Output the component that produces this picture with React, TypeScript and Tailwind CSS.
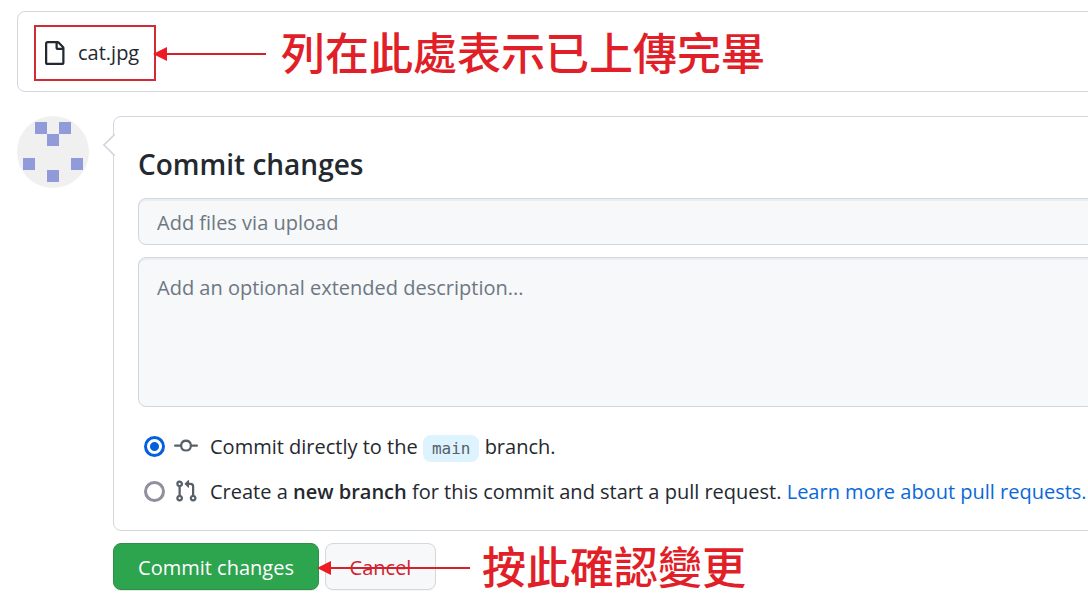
import type { ReactNode } from "react";

function FileIcon() {
  return (
    <svg viewBox="0 0 16 16" className="h-6 w-6 shrink-0 fill-[#24292f]" aria-hidden="true">
      <path
        fillRule="evenodd"
        d="M3.75 1.5a.25.25 0 00-.25.25v12.5c0 .138.112.25.25.25h9.5a.25.25 0 00.25-.25V6h-2.75A1.75 1.75 0 019 4.25V1.5H3.75zm6.75.062V4.25c0 .138.112.25.25.25h2.688a.252.252 0 00-.011-.013l-2.914-2.914a.272.272 0 00-.013-.011zM2 1.75C2 .784 2.784 0 3.75 0h6.586c.464 0 .909.184 1.237.513l2.914 2.914c.329.328.513.773.513 1.237v9.586A1.75 1.75 0 0113.25 16h-9.5A1.75 1.75 0 012 14.25V1.75z"
      />
    </svg>
  );
}

function CommitIcon() {
  return (
    <svg viewBox="0 0 16 16" className="h-6 w-6 shrink-0 fill-[#57606a]" aria-hidden="true">
      <path
        fillRule="evenodd"
        d="M10.5 7.75a2.5 2.5 0 11-5 0 2.5 2.5 0 015 0zm1.43.75a4.002 4.002 0 01-7.86 0H.75a.75.75 0 110-1.5h3.32a4.001 4.001 0 017.86 0h3.32a.75.75 0 110 1.5h-3.32z"
      />
    </svg>
  );
}

function PullRequestIcon() {
  return (
    <svg viewBox="0 0 16 16" className="h-6 w-6 shrink-0 fill-[#57606a]" aria-hidden="true">
      <path
        fillRule="evenodd"
        d="M7.177 3.073L9.573.677A.25.25 0 0110 .854v4.792a.25.25 0 01-.427.177L7.177 3.427a.25.25 0 010-.354zM3.75 2.5a.75.75 0 100 1.5.75.75 0 000-1.5zm-2.25.75a2.25 2.25 0 113 2.122v5.256a2.251 2.251 0 11-1.5 0V5.372A2.25 2.25 0 011.5 3.25zM11 2.5h-1V4h1a1 1 0 011 1v5.628a2.251 2.251 0 101.5 0V5A2.5 2.5 0 0011 2.5zm1 10.25a.75.75 0 111.5 0 .75.75 0 01-1.5 0zM3.75 12a.75.75 0 100 1.5.75.75 0 000-1.5z"
      />
    </svg>
  );
}

function Avatar() {
  const cells = [
    [18, 6],
    [42, 6],
    [30, 18],
    [6, 42],
    [54, 42],
    [30, 54],
  ];
  return (
    <svg viewBox="0 0 72 72" className="h-[72px] w-[72px] shrink-0" role="img" aria-label="Avatar">
      <circle cx="36" cy="36" r="36" fill="#f0f0f0" />
      {cells.map(([x, y]) => (
        <rect key={`${x}-${y}`} x={x} y={y} width="12" height="12" fill="#929bda" />
      ))}
    </svg>
  );
}

function Arrow({ length }: { length: number }) {
  return (
    <svg width={length} height="14" viewBox={`0 0 ${length} 14`} className="shrink-0" aria-hidden="true">
      <path d={`M10 7H${length}`} stroke="#d3222c" strokeWidth="2" />
      <path d="M0 7L14 0V14Z" fill="#ed1c24" />
    </svg>
  );
}

function Note({ children }: { children: ReactNode }) {
  return (
    <p className="pb-1 font-['Noto_Sans_CJK_TC',sans-serif] text-[44px] leading-[52px] font-medium whitespace-nowrap text-[#e11f28]">
      {children}
    </p>
  );
}

const radio =
  "m-0 h-[21px] w-[21px] shrink-0 appearance-none rounded-full border-[3px] border-[#8f8f9d] bg-white checked:border-[#0560dc] checked:bg-[radial-gradient(circle,#0560dc_4px,#fff_5px)]";

const field =
  "block w-full rounded-lg border border-[#d0d7de] bg-[#f6f8fa] px-[18px] text-xl shadow-[inset_0_2px_0_rgba(208,215,222,0.3)] placeholder:text-[#6e7781]";

export default function App() {
  return (
    <main className="min-h-screen overflow-hidden bg-white pt-[11px] pl-[17px] font-['Open_Sans',sans-serif] text-xl text-[#24292f]">
      <div className="-mr-8">
        <section className="flex items-center rounded-lg border border-[#d0d7de] px-4 pt-[13px] pb-[10px]">
          <div className="flex h-14 w-[122px] shrink-0 items-center gap-3 border-2 border-[#cf2c35] pl-[6px]">
            <FileIcon />
            <span>cat.jpg</span>
          </div>
          <div className="-ml-[3px] mr-[15px] flex pt-px">
            <Arrow length={113} />
          </div>
          <Note>列在此處表示已上傳完畢</Note>
        </section>

        <form className="mt-6 flex gap-6" onSubmit={(e) => e.preventDefault()}>
          <Avatar />
          <div className="min-w-0 flex-1">
            <div className="relative rounded-lg border border-[#d0d7de] px-6 pt-[27px] pb-6">
              <svg
                className="absolute top-[17px] -left-[11px]"
                width="12"
                height="22"
                viewBox="0 0 12 22"
                aria-hidden="true"
              >
                <path d="M12 0L1 11L12 22" fill="#fff" stroke="#d0d7de" strokeWidth="1.6" />
              </svg>
              <h2 className="mb-[14px] text-[28px] leading-10 font-semibold">Commit changes</h2>
              <input
                type="text"
                aria-label="Commit summary"
                placeholder="Add files via upload"
                className={`${field} h-[47px] pt-[2px]`}
              />
              <textarea
                aria-label="Extended description"
                placeholder="Add an optional extended description..."
                className={`${field} mt-3 h-[150px] resize-none pt-[15px] leading-[30px]`}
              />
              <div className="mt-6 ml-[6px] flex flex-col gap-[15px] whitespace-nowrap">
                <div className="flex h-[30px] items-center">
                  <input type="radio" id="direct" name="target" defaultChecked className={radio} />
                  <label htmlFor="direct" className="ml-[9px] flex items-center gap-3">
                    <CommitIcon />
                    <span className="pt-[2px]">
                      Commit directly to the{" "}
                      <code className="rounded-lg bg-[#ddf4ff] px-[9px] py-1 font-['DejaVu_Sans_Mono',monospace] text-base text-[#57606a]">
                        main
                      </code>{" "}
                      branch.
                    </span>
                  </label>
                </div>
                <div className="flex h-[30px] items-center">
                  <input type="radio" id="branch" name="target" className={radio} />
                  <label htmlFor="branch" className="ml-[9px] flex items-center gap-3">
                    <PullRequestIcon />
                    <span className="pt-[2px]">
                      Create a <strong className="font-semibold">new branch</strong> for this commit and start a pull
                      request.{" "}
                      <a href="#pull-requests" className="text-[#0969da]">
                        Learn more about pull requests.
                      </a>
                    </span>
                  </label>
                </div>
              </div>
            </div>

            <div className="relative mt-3 flex h-[47px] items-center">
              <button
                type="submit"
                className="h-[47px] w-[206px] rounded-lg border border-[#2b9148] bg-[#2da44e] pt-[2px] text-white shadow-[0_1px_0_rgba(27,31,36,0.1)]"
              >
                Commit changes
              </button>
              <button
                type="button"
                className="ml-[6px] h-[47px] w-[111px] rounded-lg border border-[#d5d8da] bg-[#f6f8fa] pt-[2px] text-[#cf222e] shadow-[0_1px_0_rgba(27,31,36,0.04)]"
              >
                Cancel
              </button>
              <div className="absolute top-[18px] left-[204px] flex">
                <Arrow length={153} />
              </div>
              <div className="ml-[46px]">
                <Note>按此確認變更</Note>
              </div>
            </div>
          </div>
        </form>
      </div>
    </main>
  );
}
